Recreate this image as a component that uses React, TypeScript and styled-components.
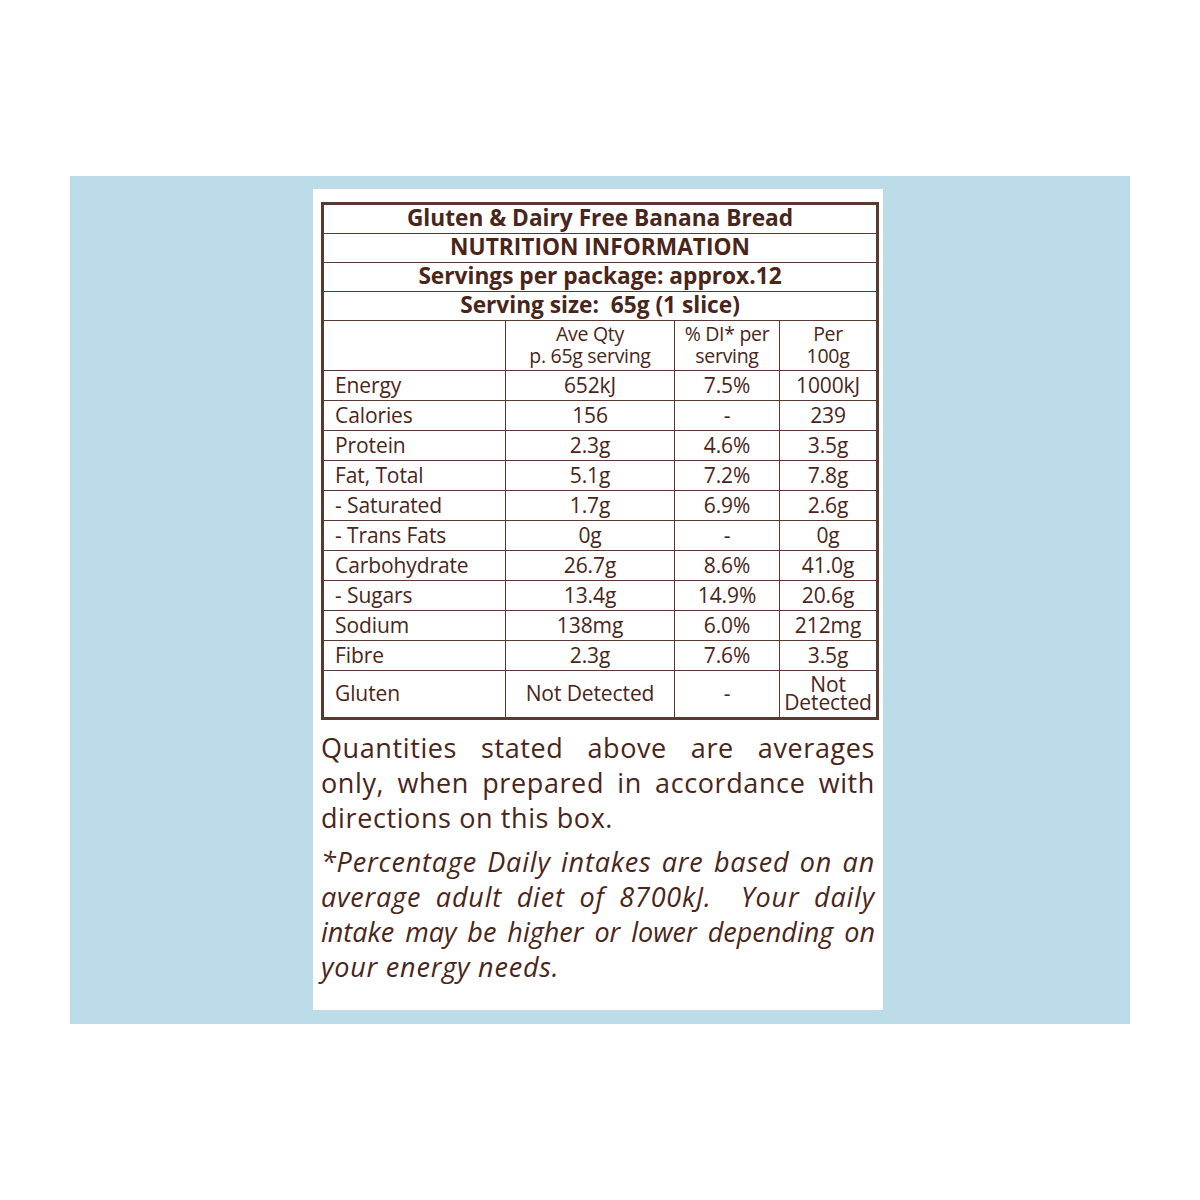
import React from "react";
import styled, { createGlobalStyle } from "styled-components";

const Global = createGlobalStyle`
  html, body { margin: 0; padding: 0; background: #ffffff; }
  body { font-family: "Open Sans", "Noto Sans", sans-serif; }
`;

const INK = "#4a2519";
const LINE = "#5a3a30";

const Page = styled.div`
  width: 1200px;
  height: 1200px;
  padding-top: 176px;
  box-sizing: border-box;
`;

const Backdrop = styled.div`
  margin-left: 70px;
  width: 1060px;
  height: 848px;
  background: #bddcea;
  padding: 13px 0 0 243px;
  box-sizing: border-box;
`;

const Card = styled.div`
  width: 570px;
  height: 821px;
  background: #ffffff;
  padding: 13px 6px 0 8px;
  box-sizing: border-box;
  color: ${INK};
`;

const Table = styled.table`
  width: 555px;
  border-collapse: collapse;
  border: 3px solid ${LINE};
  table-layout: fixed;
`;

const TitleCell = styled.td`
  border: 1.5px solid ${LINE};
  height: 25px;
  padding: 0 0 3px 0;
  text-align: center;
  font-weight: 700;
  font-size: 22.7px;
  line-height: 25px;
  letter-spacing: 0;
  white-space: nowrap;
`;

const HeadCell = styled.td`
  border: 1.5px solid ${LINE};
  height: 47px;
  padding: 0 0 2px 0;
  text-align: center;
  font-size: 19.5px;
  line-height: 22px;
  letter-spacing: -0.3px;
  vertical-align: middle;
`;

const Row = styled.tr<{ $tall?: boolean }>`
  height: ${(p) => (p.$tall ? "48px" : "30px")};
`;

const NameCell = styled.td`
  border: 1.5px solid ${LINE};
  padding: 0 0 2px 11px;
  text-align: left;
  font-size: 21px;
  line-height: 26px;
  letter-spacing: -0.1px;
  white-space: nowrap;
`;

const ValueCell = styled.td<{ $stack?: boolean }>`
  border: 1.5px solid ${LINE};
  padding: 0 0 2px 0;
  text-align: center;
  font-size: 21px;
  line-height: ${(p) => (p.$stack ? "18px" : "26px")};
  letter-spacing: -0.1px;
  white-space: nowrap;
`;

const Notes = styled.div`
  width: 554px;
  margin-top: 10px;
`;

const Para = styled.div<{ $italic?: boolean }>`
  margin: 0 0 9px 0;
  font-size: 27px;
  line-height: 35px;
  font-style: ${(p) => (p.$italic ? "italic" : "normal")};
  letter-spacing: ${(p) => (p.$italic ? "0.8px" : "0.6px")};
`;

const Line = styled.span<{ $last?: boolean; $tight?: boolean }>`
  display: block;
  white-space: nowrap;
  text-align: ${(p) => (p.$last ? "left" : "justify")};
  text-align-last: ${(p) => (p.$last ? "left" : "justify")};
  letter-spacing: ${(p) => (p.$tight ? "0px" : "inherit")};
  word-spacing: ${(p) => (p.$tight ? "-4px" : "0")};
`;

const rows: [string, string, string, string][] = [
  ["Energy", "652kJ", "7.5%", "1000kJ"],
  ["Calories", "156", "-", "239"],
  ["Protein", "2.3g", "4.6%", "3.5g"],
  ["Fat, Total", "5.1g", "7.2%", "7.8g"],
  ["- Saturated", "1.7g", "6.9%", "2.6g"],
  ["- Trans Fats", "0g", "-", "0g"],
  ["Carbohydrate", "26.7g", "8.6%", "41.0g"],
  ["- Sugars", "13.4g", "14.9%", "20.6g"],
  ["Sodium", "138mg", "6.0%", "212mg"],
  ["Fibre", "2.3g", "7.6%", "3.5g"],
];

export default function App() {
  return (
    <Page>
      <Global />
      <Backdrop>
        <Card>
          <Table>
            <colgroup>
              <col style={{ width: 183 }} />
              <col style={{ width: 169 }} />
              <col style={{ width: 105 }} />
              <col style={{ width: 98 }} />
            </colgroup>
            <tbody>
              <tr>
                <TitleCell colSpan={4}>Gluten &amp; Dairy Free Banana Bread</TitleCell>
              </tr>
              <tr>
                <TitleCell colSpan={4}>NUTRITION INFORMATION</TitleCell>
              </tr>
              <tr>
                <TitleCell colSpan={4}>Servings per package: approx.12</TitleCell>
              </tr>
              <tr>
                <TitleCell colSpan={4}>Serving size:&nbsp; 65g (1 slice)</TitleCell>
              </tr>
              <tr>
                <HeadCell />
                <HeadCell>
                  Ave Qty
                  <br />
                  p. 65g serving
                </HeadCell>
                <HeadCell>
                  % DI* per
                  <br />
                  serving
                </HeadCell>
                <HeadCell>
                  Per
                  <br />
                  100g
                </HeadCell>
              </tr>
              {rows.map((r) => (
                <Row key={r[0]}>
                  <NameCell>{r[0]}</NameCell>
                  <ValueCell>{r[1]}</ValueCell>
                  <ValueCell>{r[2]}</ValueCell>
                  <ValueCell>{r[3]}</ValueCell>
                </Row>
              ))}
              <Row $tall>
                <NameCell>Gluten</NameCell>
                <ValueCell>Not Detected</ValueCell>
                <ValueCell>-</ValueCell>
                <ValueCell $stack>
                  Not
                  <br />
                  Detected
                </ValueCell>
              </Row>
            </tbody>
          </Table>
          <Notes>
            <Para>
              <Line>Quantities stated above are averages</Line>
              <Line>only, when prepared in accordance with</Line>
              <Line $last>directions on this box.</Line>
            </Para>
            <Para $italic>
              <Line>*Percentage Daily intakes are based on an</Line>
              <Line>average adult diet of 8700kJ.&nbsp; Your daily</Line>
              <Line $tight>intake may be higher or lower depending on</Line>
              <Line $last>your energy needs.</Line>
            </Para>
          </Notes>
        </Card>
      </Backdrop>
    </Page>
  );
}
